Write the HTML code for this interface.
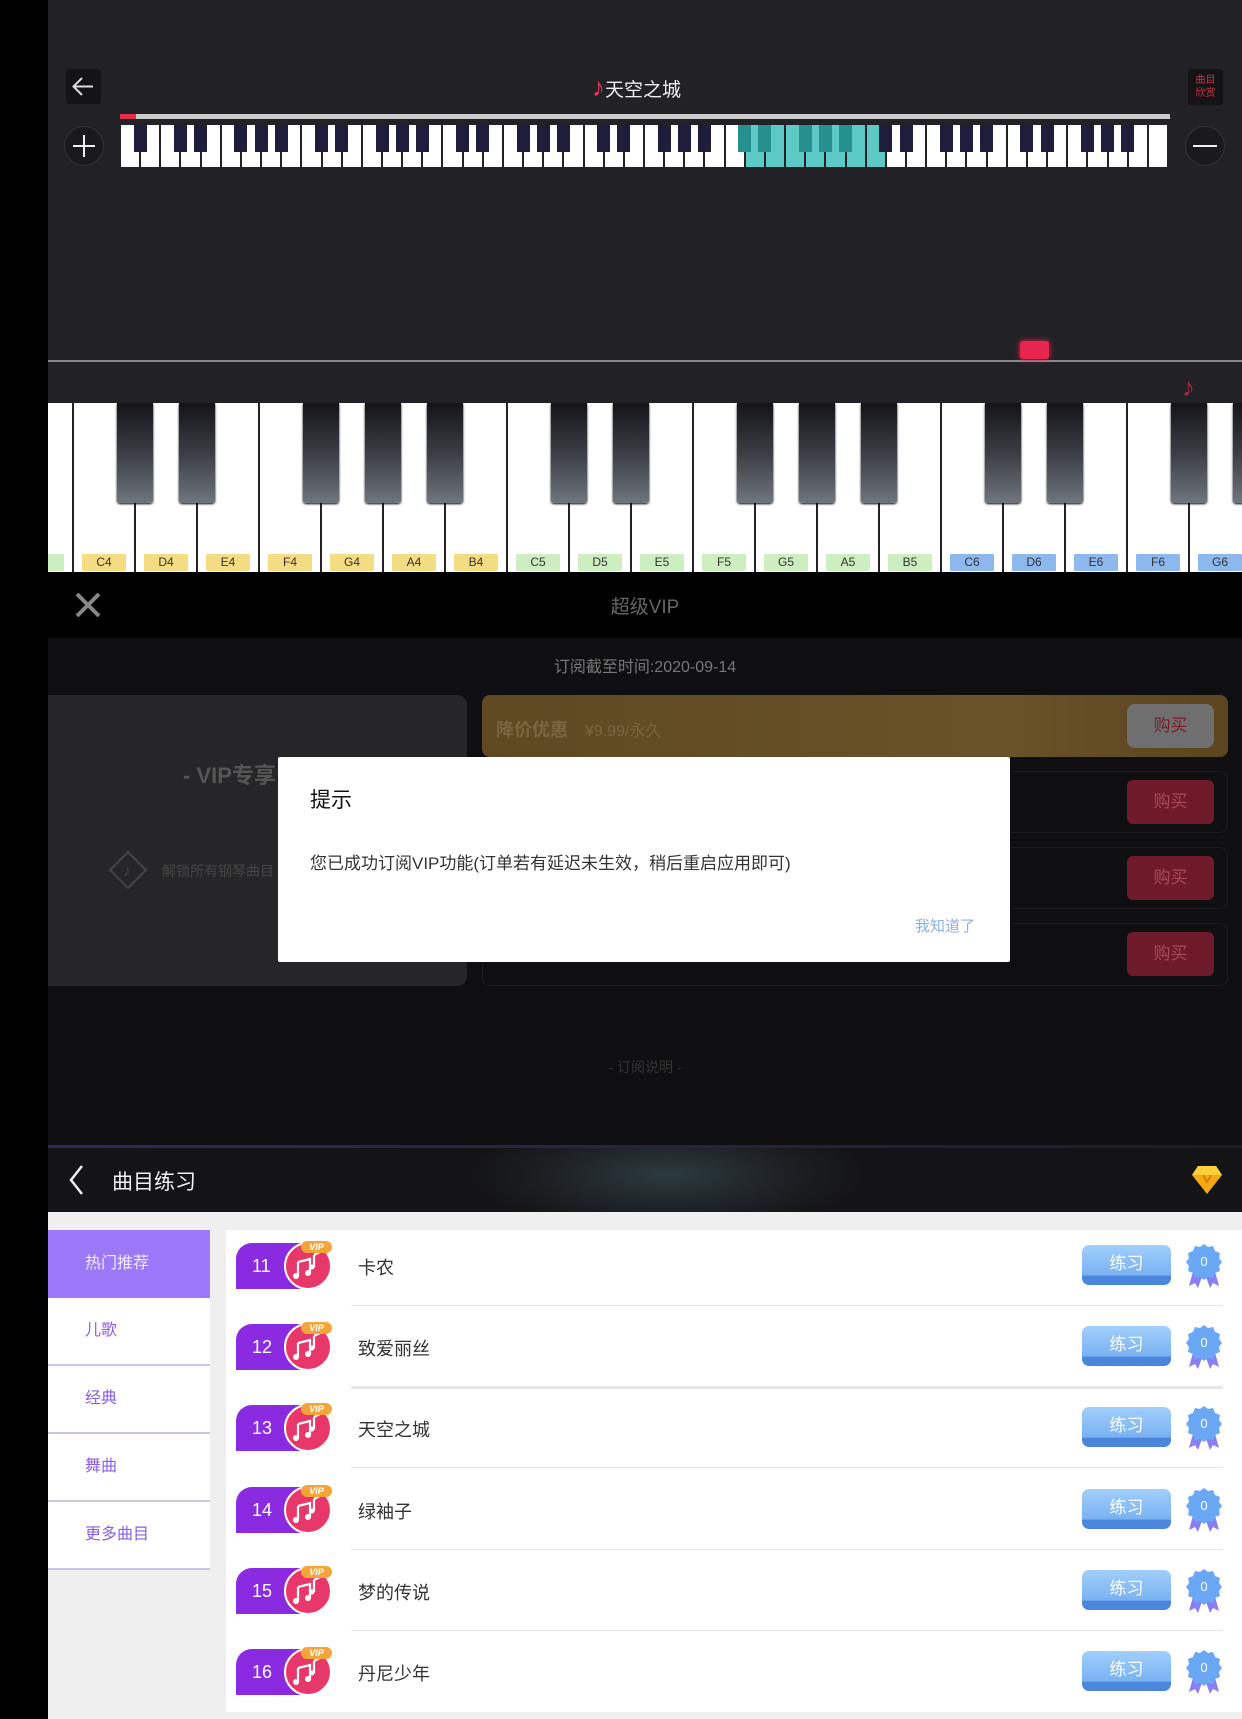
<!DOCTYPE html>
<html><head><meta charset="utf-8"><style>
*{margin:0;padding:0;box-sizing:border-box}
body{width:1242px;height:1719px;position:relative;overflow:hidden;background:#000;font-family:"Liberation Sans","Noto Sans CJK SC",sans-serif}
.a{position:absolute}
</style></head><body>
<!-- Section 1 -->
<div class="a" style="left:48px;top:0;width:1194px;height:572px;background:#222226"></div>
<div class="a" style="left:66px;top:69px;width:35px;height:35px;background:#141416;border-radius:3px"></div>
<svg class="a" style="left:66px;top:69px" width="35" height="35"><path d="M27 17.5H8M16 9l-8.5 8.5L16 26" stroke="#ddd" stroke-width="2" fill="none"/></svg>
<div class="a" style="left:592px;top:72px;font-size:19px;color:#eee;line-height:30px"><span style="color:#e8345a;font-size:26px">♪</span>天空之城</div>
<div class="a" style="left:1188px;top:69px;width:35px;height:36px;background:#141416;border-radius:3px;color:#c8324a;font-size:10px;line-height:13px;text-align:center;padding-top:5px">曲目<br>欣赏</div>
<div class="a" style="left:120px;top:114px;width:1050px;height:5px;background:#ccc"></div>
<div class="a" style="left:120px;top:114px;width:16px;height:5px;background:#e0304e"></div>
<div class="a" style="left:64px;top:126px;width:40px;height:40px;border-radius:50%;background:#1a1a1c;border:1px solid #333"></div>
<svg class="a" style="left:64px;top:126px" width="40" height="40"><path d="M20 9v22M9 20h22" stroke="#eee" stroke-width="2"/></svg>
<div class="a" style="left:1185px;top:126px;width:40px;height:40px;border-radius:50%;background:#1a1a1c;border:1px solid #333"></div>
<svg class="a" style="left:1185px;top:126px" width="40" height="40"><path d="M8 20h24" stroke="#eee" stroke-width="2"/></svg>
<div id="mini" class="a" style="left:120px;top:125px;width:1050px;height:42px"></div>
<div class="a" style="left:48px;top:360px;width:1194px;height:2px;background:#8a8a8e"></div>
<div class="a" style="left:1020px;top:341px;width:29px;height:18px;background:#e8254e;border-radius:3px;box-shadow:0 0 6px #e8254e"></div>
<div class="a" style="left:1182px;top:372px;color:#a0283e;font-size:26px">♪</div>
<div class="a" style="left:1142px;top:405px;color:#f3a9b8;font-size:24px">♪</div>
<div class="a" style="left:1112px;top:462px;color:#f3c0cb;font-size:22px">♪</div>
<div id="big" class="a" style="left:48px;top:403px;width:1194px;height:169px;overflow:hidden;background:#222"></div>
<!-- Section 2 -->
<div class="a" style="left:48px;top:572px;width:1194px;height:66px;background:#000"></div>
<svg class="a" style="left:73px;top:590px" width="30" height="30"><path d="M4 4l22 22M26 4L4 26" stroke="#888" stroke-width="4"/></svg>
<div class="a" style="left:0;width:1290px;top:592px;text-align:center;color:#666;font-size:19px">超级VIP</div>
<div class="a" style="left:48px;top:638px;width:1194px;height:507px;background:#0f0f11"></div>
<div class="a" style="left:0;width:1290px;top:653px;text-align:center;color:#777;font-size:16px">订阅截至时间:2020-09-14</div>
<div class="a" style="left:48px;top:695px;width:419px;height:291px;background:#262628;border-radius:0 10px 10px 0"></div>
<div class="a" style="left:183px;top:758px;color:#555;font-size:22px;font-weight:bold">- VIP专享</div>
<svg class="a" style="left:108px;top:850px" width="40" height="40"><path d="M20 2L38 20 20 38 2 20z" stroke="#444" stroke-width="2" fill="none"/><text x="15" y="26" fill="#444" font-size="16">♪</text></svg>
<div class="a" style="left:162px;top:861px;color:#444;font-size:14px">解锁所有钢琴曲目</div>
<div class="a" style="left:482px;top:695px;width:746px;height:62px;background:linear-gradient(90deg,#5e4922,#6a5228 70%,#5a4520);border-radius:8px"></div>
<div class="a" style="left:496px;top:716px;color:#7a6540;font-size:18px;font-weight:bold">降价优惠 <span style="font-weight:normal;font-size:16px;margin-left:12px">¥9.99/永久</span></div>
<div class="a" style="left:482px;top:771px;width:746px;height:62px;border:1px solid #1c1c1e;border-radius:8px"></div>
<div class="a" style="left:482px;top:847px;width:746px;height:62px;border:1px solid #1c1c1e;border-radius:8px"></div>
<div class="a" style="left:482px;top:923px;width:746px;height:63px;border:1px solid #1c1c1e;border-radius:8px"></div>
<div class="a" style="left:1127px;top:704px;width:87px;height:44px;background:#6f6f6f;border-radius:8px;color:#7a1c2c;font-size:17px;text-align:center;line-height:44px">购买</div>
<div class="a" style="left:1127px;top:780px;width:87px;height:44px;background:#6e1a2a;border-radius:6px;color:#a54a5a;font-size:17px;text-align:center;line-height:44px">购买</div>
<div class="a" style="left:1127px;top:856px;width:87px;height:44px;background:#6e1a2a;border-radius:6px;color:#a54a5a;font-size:17px;text-align:center;line-height:44px">购买</div>
<div class="a" style="left:1127px;top:932px;width:87px;height:44px;background:#6e1a2a;border-radius:6px;color:#a54a5a;font-size:17px;text-align:center;line-height:44px">购买</div>
<div class="a" style="left:0;width:1290px;top:1057px;text-align:center;color:#333;font-size:14px">- 订阅说明 -</div>
<div class="a" style="left:278px;top:757px;width:732px;height:205px;background:#fff;border-radius:2px"></div>
<div class="a" style="left:310px;top:784px;color:#111;font-size:21px">提示</div>
<div class="a" style="left:310px;top:849px;color:#333;font-size:17px">您已成功订阅VIP功能(订单若有延迟未生效，稍后重启应用即可)</div>
<div class="a" style="left:915px;top:915px;color:#8ab0e8;font-size:15px">我知道了</div>
<!-- Section 3 -->
<div class="a" style="left:48px;top:1145px;width:1194px;height:67px;background:radial-gradient(ellipse 200px 60px at 620px 30px,#2c3a3e,#1a1c20 70%,#141416)"></div>
<div class="a" style="left:48px;top:1145px;width:1194px;height:3px;background:linear-gradient(90deg,#302a58,#1e1e26)"></div>
<svg class="a" style="left:64px;top:1162px" width="24" height="36"><path d="M18 4L7 18l11 14" stroke="#eee" stroke-width="2.5" fill="none"/></svg>
<div class="a" style="left:112px;top:1166px;color:#f2f2f2;font-size:21px">曲目练习</div>
<svg class="a" style="left:1190px;top:1164px" width="34" height="32"><path d="M8 2h18l6 9-15 19L2 11z" fill="#f6a714"/><path d="M8 2h18l6 9H2z" fill="#fcd03c"/><path d="M13 11l4 7 4-7" stroke="#d07a00" stroke-width="1.5" fill="none"/></svg>
<div class="a" style="left:48px;top:1212px;width:1194px;height:507px;background:#efefef"></div>
<div class="a" style="left:48px;top:1230px;width:162px;height:68px;background:#9b79f8;color:#f0eaff;font-size:16px;line-height:68px;padding-left:37px">热门推荐</div>
<div id="menu"></div>
<div class="a" style="left:226px;top:1230px;width:1016px;height:482px;background:#fff"></div>
<div id="list"></div>
<script>
var m=document.getElementById('mini'),h='',w=1048/52;
for(var i=0;i<52;i++){var x=i*w;var hl=(x>=612&&x<752);h+='<div class="a" style="left:'+(x+1)+'px;top:0;width:'+(w-2)+'px;height:42px;background:'+(hl?'#5cc9c6':'#fff')+'"></div>';}
for(var i=0;i<51;i++){var n=i%7;
 if(n==0||n==2||n==3||n==5||n==6){var x=(i+1)*w;var hl=(x>=612&&x<=752);h+='<div class="a" style="left:'+(x-6.5)+'px;top:0;width:13px;height:27px;background:'+(hl?'#25908e':'#1e1e3c')+'"></div>';}}
m.innerHTML=h;
var b=document.getElementById('big');h='';
var names=['B3','C4','D4','E4','F4','G4','A4','B4','C5','D5','E5','F5','G5','A5','B5','C6','D6','E6','F6','G6'];
for(var i=0;i<20;i++){var x=25+(i-1)*62;var c=names[i];var col=c[1]=='4'?'#f4dc82':(c[1]=='5'||c[1]=='3'?'#cdeec0':'#8db8ee');
 h+='<div class="a" style="left:'+(x+1)+'px;top:0;width:60px;height:169px;background:#fff"></div>';
 h+='<div class="a" style="left:'+(x+9)+'px;top:151px;width:44px;height:17px;background:'+col+';font-size:12px;color:#333;text-align:center;line-height:17px;border-radius:1px">'+(i?c:'')+'</div>';}
for(var i=1;i<20;i++){var n=names[i][0];if('CDFGA'.indexOf(n)>=0){var x=25+i*62;
 h+='<div class="a" style="left:'+(x-18)+'px;top:0;width:36px;height:100px;background:linear-gradient(#141418,#3a3e44 50%,#6e757c);border-radius:0 0 3px 3px;box-shadow:0 1px 2px #000"></div>';}}
b.innerHTML=h;
var me=document.getElementById('menu');h='';var it=['儿歌','经典','舞曲','更多曲目'];
for(var i=0;i<4;i++){var y=1298+i*68;h+='<div class="a" style="left:48px;top:'+y+'px;width:162px;height:66px;background:#fff;color:#8a5ee0;font-size:16px;line-height:66px;padding-left:37px">'+it[i]+'</div><div class="a" style="left:48px;top:'+(y+66)+'px;width:162px;height:2px;background:#cdc3ea"></div>';}
me.innerHTML=h;
var l=document.getElementById('list');h='';var s=['卡农','致爱丽丝','天空之城','绿袖子','梦的传说','丹尼少年'];
for(var i=0;i<6;i++){var c=1266+i*81.2;
 h+='<div class="a" style="left:236px;top:'+(c-23)+'px;width:72px;height:46px;background:#8a2be2;border-radius:16px 0 0 0;color:#fff;font-size:18px;line-height:46px;padding-left:16px">'+(11+i)+'</div>';
 h+='<div class="a" style="left:284px;top:'+(c-24)+'px;width:48px;height:48px;border-radius:50%;background:#e8386a;border:2px solid #fff"></div>';
 h+='<svg class="a" style="left:292px;top:'+(c-16)+'px" width="34" height="32"><path d="M6 12l12-3v14M6 12v14M22 5v12M22 5l6-3" stroke="#fff" stroke-width="2.2" fill="none"/><circle cx="4" cy="26" r="3" fill="#fff"/><circle cx="16" cy="23" r="3" fill="#fff"/><circle cx="20" cy="17" r="2.5" fill="#fff"/></svg>';
 h+='<div class="a" style="left:301px;top:'+(c-25)+'px;width:31px;height:12px;background:#f3a53a;border-radius:6px;color:#fff;font-size:9px;font-weight:bold;text-align:center;line-height:12px;font-style:italic">VIP</div>';
 h+='<div class="a" style="left:358px;top:'+(c-12)+'px;color:#333;font-size:18px">'+s[i]+'</div>';
 h+='<div class="a" style="left:1082px;top:'+(c-21)+'px;width:89px;height:40px;border-radius:7px;background:linear-gradient(#a2cffc,#79b2f2 75%,#4a86dc 78%);color:#fff;font-size:17px;text-align:center;line-height:37px">练习</div>';
 h+='<svg class="a" style="left:1184px;top:'+(c-24)+'px" width="40" height="50"><path d="M10 26l-5 18 6-3 3 5 5-14zM30 26l5 18-6-3-3 5-5-14z" fill="#8a7ef5"/><path d="M20 2l4 3 5-1 2 5 5 2-1 5 3 4-3 4 1 5-5 2-2 5-5-1-4 3-4-3-5 1-2-5-5-2 1-5-3-4 3-4-1-5 5-2 2-5 5 1z" fill="#6aa8f6"/><text x="20" y="24" fill="#fff" font-size="13" text-anchor="middle">0</text></svg>';
 if(i<5)h+='<div class="a" style="left:351px;top:'+(c+39)+'px;width:872px;height:'+(i==1?3:1)+'px;background:#e6e6e6"></div>';}
l.innerHTML=h;
</script>
</body></html>
